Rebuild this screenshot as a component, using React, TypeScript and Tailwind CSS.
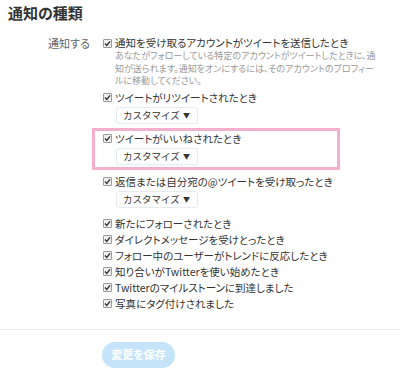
import React from 'react';

const font = "font-['Noto_Sans_CJK_JP','Noto_Sans',sans-serif]";

function Check() {
  return (
    <span className="mr-[3px] inline-flex h-[9px] w-[9px] shrink-0 items-center justify-center rounded-[1px] border border-[#9a9a9a] bg-[#f0f0f0]">
      <svg width="7" height="7" viewBox="0 0 7 7">
        <path d="M1 3.6 L2.8 5.4 L6 1.4" fill="none" stroke="#333" strokeWidth="1.4" />
      </svg>
    </span>
  );
}

function Row({ text, className = '' }: { text: string; className?: string }) {
  return (
    <div className={`flex h-[16px] items-center whitespace-nowrap text-[10.5px] leading-[16px] text-[#333] ${className}`}>
      <Check />
      <span>{text}</span>
    </div>
  );
}

function Customize() {
  return (
    <div className="ml-[13px] mt-[1px] flex h-[17px] w-[82px] items-center justify-between rounded-[3px] border border-[#e6ebef] bg-white pl-[6px] pr-[7px] text-[9.5px] text-[#333] [font-feature-settings:normal]">
      <span>カスタマイズ</span>
      <span className="text-[7px]">▼</span>
    </div>
  );
}

export default function App() {
  const simple = [
    '新たにフォローされたとき',
    'ダイレクトメッセージを受けとったとき',
    'フォロー中のユーザーがトレンドに反応したとき',
    '知り合いがTwitterを使い始めたとき',
    'Twitterのマイルストーンに到達しました',
    '写真にタグ付けされました',
  ];

  return (
    <div className={`h-[369px] w-[400px] overflow-hidden bg-white ${font} [font-feature-settings:'palt']`}>
      <div className="h-[26px] pl-[8px] text-[15px] font-bold leading-[26px] text-[#333]">通知の種類</div>

      <div className="mt-[9px] flex">
        <div className="w-[103px] shrink-0 pl-[48px] text-[11px] leading-[16px] text-[#666]">通知する</div>
        <div className="flex flex-col">
          <Row text="通知を受け取るアカウントがツイートを送信したとき" />
          <div className="mt-[-1px] whitespace-nowrap pl-[12px] text-[9px] leading-[12.5px] text-[#999]">
            <div>あなたがフォローしている特定のアカウントがツイートしたときに、通</div>
            <div>知が送られます。通知をオンにするには、そのアカウントのプロフィー</div>
            <div>ルに移動してください。</div>
          </div>

          <Row text="ツイートがリツイートされたとき" className="mt-[2px]" />
          <Customize />

          <div className="-ml-[11px] mt-[4px] w-[248px] border-[3px] border-[#f3b0cc] pb-[2px] pl-[8px]">
            <Row text="ツイートがいいねされたとき" />
            <Customize />
          </div>

          <Row text="返信または自分宛の@ツイートを受け取ったとき" className="mt-[4px]" />
          <Customize />

          <div className="mt-[8px] flex flex-col">
            {simple.map((t) => (
              <Row key={t} text={t} />
            ))}
          </div>
        </div>
      </div>

      <div className="mt-[17px] border-t border-[#e8ecef]" />
      <div className="pl-[102px] pt-[12px]">
        <button className="flex h-[26px] w-[73px] items-center justify-center rounded-full bg-[#c5e4fa] text-[11px] font-bold text-white">
          変更を保存
        </button>
      </div>
    </div>
  );
}
